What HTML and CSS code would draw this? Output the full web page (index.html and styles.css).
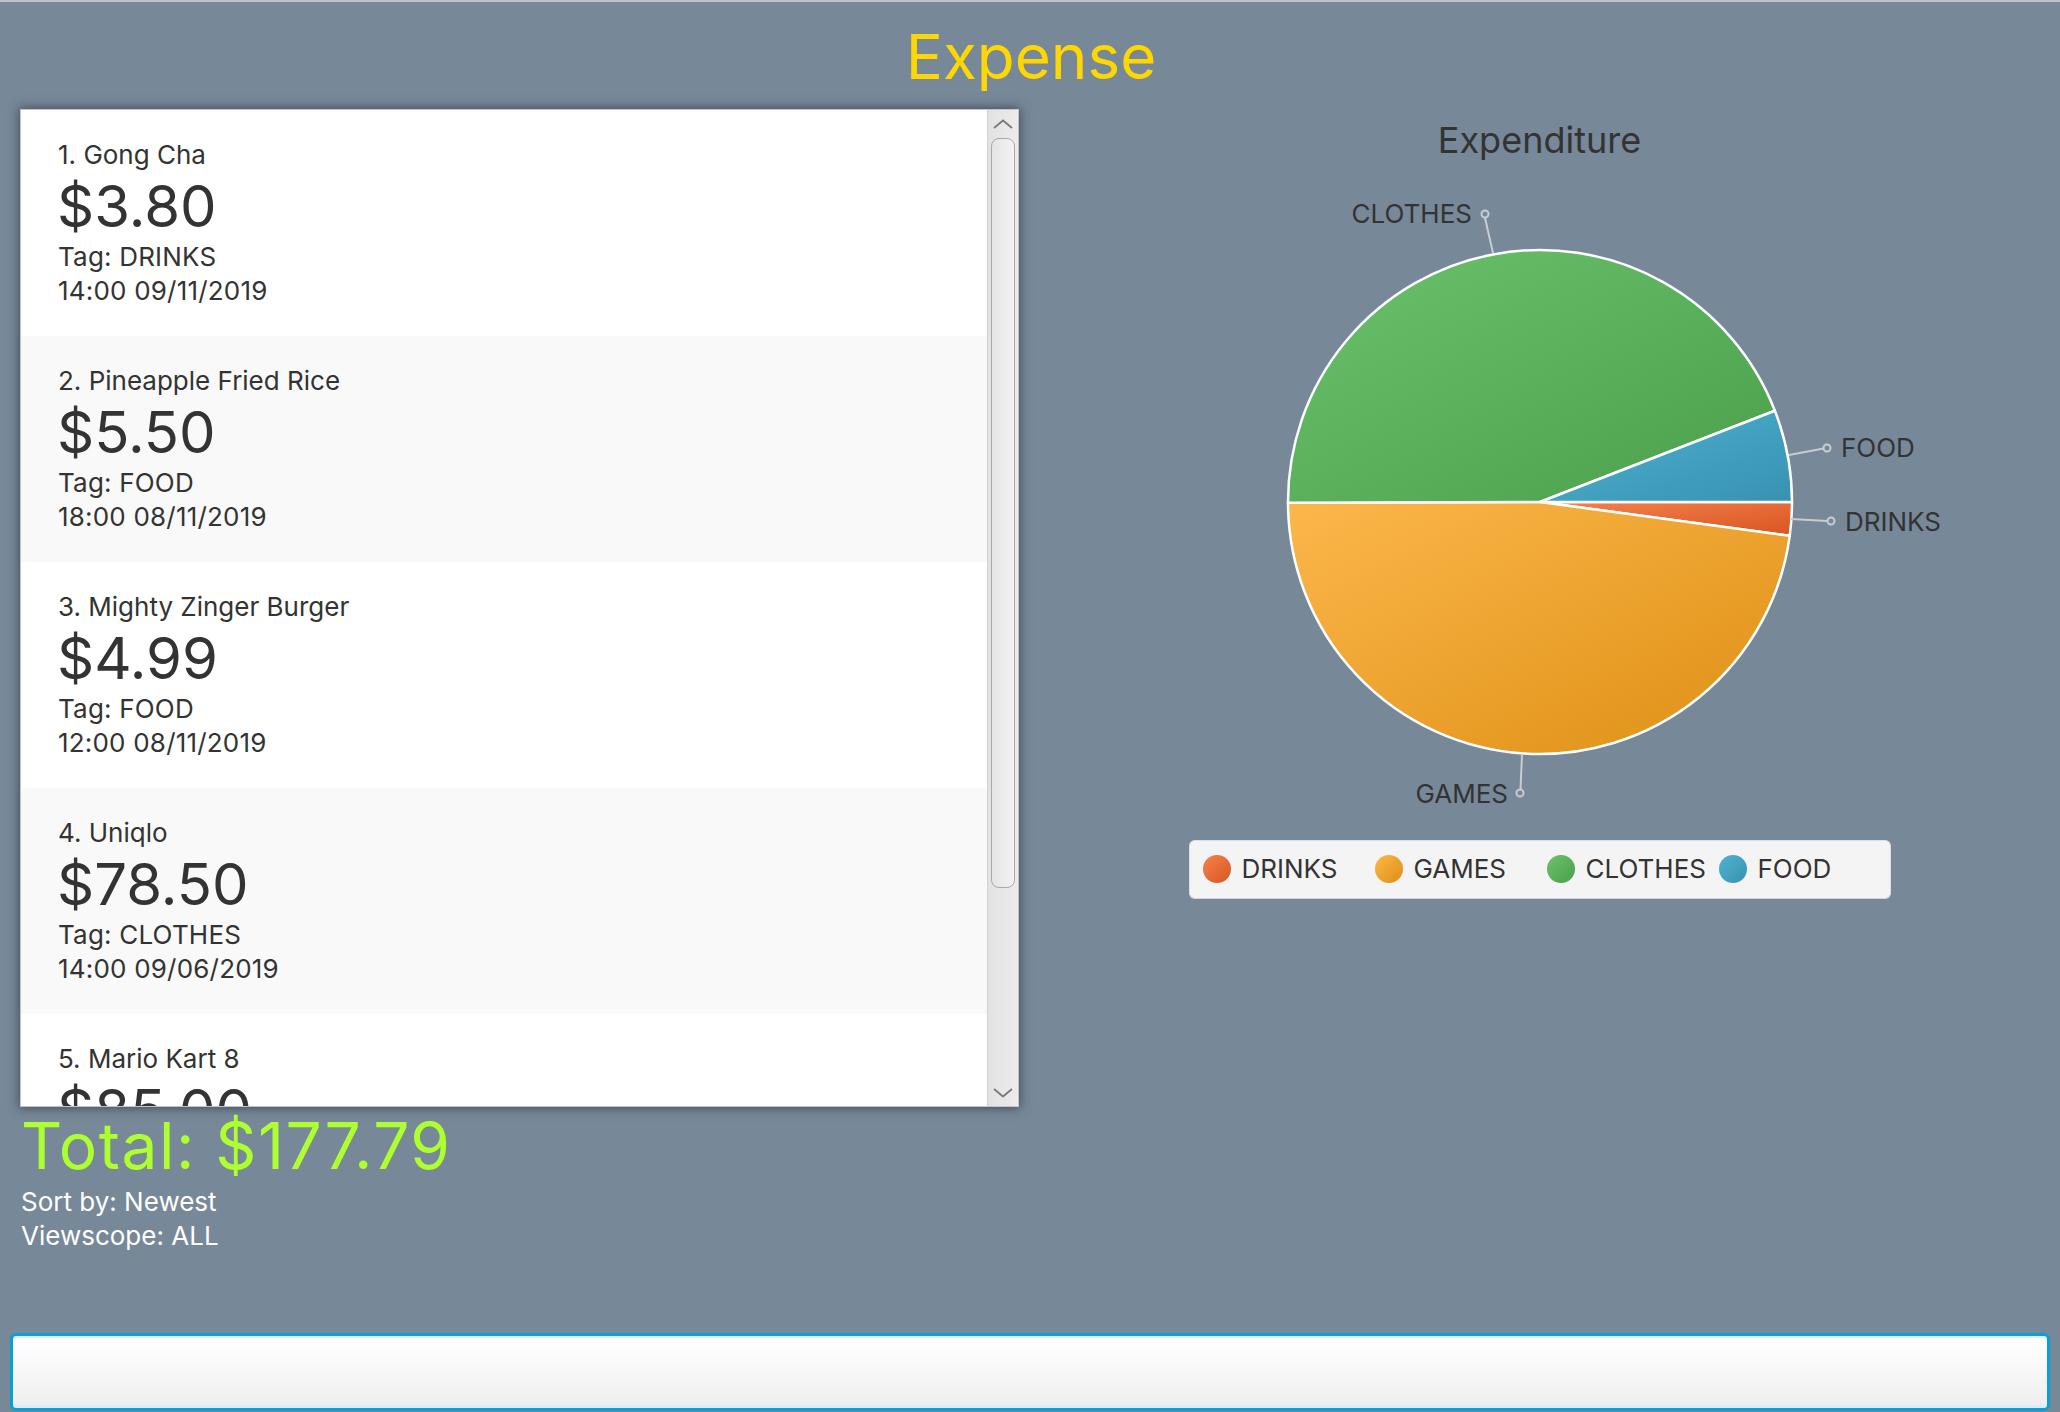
FILE: index.html
```html
<!DOCTYPE html>
<html lang="en">
<head>
<meta charset="utf-8">
<title>Expense</title>
<link rel="stylesheet" href="styles.css">
</head>
<body>
<div class="app">
  <header class="app-title">Expense</header>
  <main class="main">
    <section class="left">
      <div class="list-panel">
        <div class="list">
          <div class="card">
            <div class="card-name">1. Gong Cha</div>
            <div class="card-price">$3.80</div>
            <div class="card-line">Tag: DRINKS</div>
            <div class="card-line">14:00 09/11/2019</div>
          </div>
          <div class="card card-alt">
            <div class="card-name">2. Pineapple Fried Rice</div>
            <div class="card-price">$5.50</div>
            <div class="card-line">Tag: FOOD</div>
            <div class="card-line">18:00 08/11/2019</div>
          </div>
          <div class="card">
            <div class="card-name">3. Mighty Zinger Burger</div>
            <div class="card-price">$4.99</div>
            <div class="card-line">Tag: FOOD</div>
            <div class="card-line">12:00 08/11/2019</div>
          </div>
          <div class="card card-alt">
            <div class="card-name">4. Uniqlo</div>
            <div class="card-price">$78.50</div>
            <div class="card-line">Tag: CLOTHES</div>
            <div class="card-line">14:00 09/06/2019</div>
          </div>
          <div class="card card-last">
            <div class="card-name">5. Mario Kart 8</div>
            <div class="card-price">$85.00</div>
          </div>
        </div>
        <div class="scrollbar">
          <div class="arrow arrow-up">
            <svg width="20" height="10" viewBox="0 0 20 10"><path d="M1 9 L10 1.5 L19 9" fill="none" stroke="#7a7a7a" stroke-width="1.8"/></svg>
          </div>
          <div class="thumb"></div>
          <div class="track-fill"></div>
          <div class="arrow arrow-down">
            <svg width="20" height="10" viewBox="0 0 20 10"><path d="M1 1 L10 8.5 L19 1" fill="none" stroke="#7a7a7a" stroke-width="1.8"/></svg>
          </div>
        </div>
      </div>
      <div class="total">Total: $177.79</div>
      <div class="meta">Sort by: Newest</div>
      <div class="meta">Viewscope: ALL</div>
    </section>
    <section class="chart">
      <div class="chart-title">Expenditure</div>
      <svg class="pie" width="1041" height="678" viewBox="0 0 1041 678">
        <defs>
          <linearGradient id="gDrinks" x1="0" y1="0" x2="1" y2="1"><stop offset="0" stop-color="#f5834f"/><stop offset="1" stop-color="#d9551f"/></linearGradient>
          <linearGradient id="gGames" x1="0" y1="0" x2="1" y2="1"><stop offset="0" stop-color="#fcb74b"/><stop offset="1" stop-color="#de8f14"/></linearGradient>
          <linearGradient id="gClothes" x1="0" y1="0" x2="1" y2="1"><stop offset="0" stop-color="#6cc26c"/><stop offset="1" stop-color="#4b9f4b"/></linearGradient>
          <linearGradient id="gFood" x1="0" y1="0" x2="1" y2="1"><stop offset="0" stop-color="#4fb3d2"/><stop offset="1" stop-color="#3792b0"/></linearGradient>
        </defs>
        <g stroke="#ffffff" stroke-width="2.5" stroke-linejoin="round">
          <path d="M521,340 L773,340 A252,252 0 0 1 770.73,373.74 Z" fill="url(#gDrinks)"/>
          <path d="M521,340 L770.73,373.74 A252,252 0 0 1 269,340.84 Z" fill="url(#gGames)"/>
          <path d="M521,340 L269,340.84 A252,252 0 0 1 755.88,248.71 Z" fill="url(#gClothes)"/>
          <path d="M521,340 L755.88,248.71 A252,252 0 0 1 773,340 Z" fill="url(#gFood)"/>
        </g>
        <g stroke="#c9ccd0" stroke-width="2" fill="none">
          <path d="M474,91 L466,56"/>
          <circle cx="466" cy="52" r="3.5"/>
          <path d="M770,293 L804.5,286.5"/>
          <circle cx="808" cy="286" r="3.5"/>
          <path d="M772,357 L808.5,359"/>
          <circle cx="812" cy="359" r="3.5"/>
          <path d="M503,592 L501.5,627.5"/>
          <circle cx="501" cy="631" r="3.5"/>
        </g>
        <g class="pie-label">
          <text x="453" y="61" text-anchor="end">CLOTHES</text>
          <text x="822" y="295">FOOD</text>
          <text x="826" y="369">DRINKS</text>
          <text x="489" y="641" text-anchor="end">GAMES</text>
        </g>
      </svg>
      <div class="legend">
        <div class="legend-item"><span class="dot dot-drinks"></span><span class="legend-text">DRINKS</span></div>
        <div class="legend-item"><span class="dot dot-games"></span><span class="legend-text">GAMES</span></div>
        <div class="legend-item"><span class="dot dot-clothes"></span><span class="legend-text">CLOTHES</span></div>
        <div class="legend-item"><span class="dot dot-food"></span><span class="legend-text">FOOD</span></div>
      </div>
    </section>
  </main>
  <div class="command"><div class="command-inner"></div></div>
</div>
</body>
</html>
```
FILE: styles.css
```css
* { box-sizing: border-box; }
html, body {
  margin: 0;
  padding: 0;
  height: 100%;
}
body {
  background: #778899;
  font-family: Inter, "Noto Sans", "Liberation Sans", sans-serif;
  color: #333333;
  overflow: hidden;
}
.app {
  height: 1412px;
  display: flex;
  flex-direction: column;
  border-top: 2px solid #bfc4c9;
}
.app-title {
  padding-top: 15px;
  height: 95px;
  font-size: 62px;
  line-height: 80px;
  color: #ffd700;
  text-align: center;
  margin-right: -2px;
}
.main {
  flex: 1;
  display: flex;
  flex-direction: row;
  margin-top: 12px;
  min-height: 0;
}
.left {
  margin-left: 20px;
  width: 999px;
  display: flex;
  flex-direction: column;
}
.list-panel {
  height: 998px;
  display: flex;
  flex-direction: row;
  border: 1px solid #c4c4c4;
  background: #ffffff;
  box-shadow: 0 0 10px 1px rgba(20, 30, 40, 0.55);
  overflow: hidden;
}
.list {
  flex: 1;
  overflow: hidden;
}
.card {
  height: 226px;
  padding: 28px 0 28px 37px;
  background: #ffffff;
}
.card-last {
  height: 92px;
  padding-bottom: 0;
  overflow: hidden;
}
.card-alt { background: #f9f9f9; }
.card-name, .card-line {
  font-size: 26px;
  line-height: 34px;
  white-space: nowrap;
}
.card-line { letter-spacing: 0.2px; }
.card-price {
  font-size: 58px;
  line-height: 68px;
  margin-left: -1px;
}
.scrollbar {
  width: 31px;
  display: flex;
  flex-direction: column;
  border-left: 1px solid #d2d2d2;
  background: linear-gradient(to right, #e2e2e2, #ececec);
}
.arrow {
  display: flex;
  align-items: center;
  justify-content: center;
}
.arrow-up { height: 27px; }
.arrow-down { height: 24px; padding-bottom: 2px; }
.thumb {
  margin: 1px 3px 0 3px;
  height: 750px;
  border: 1.5px solid #a9a9a9;
  border-radius: 8px;
  background: linear-gradient(to right, #e4e4e4, #f3f3f3);
}
.track-fill { flex: 1; }
.total {
  font-size: 64px;
  line-height: 78px;
  color: #adff2f;
  margin-left: 1px;
  letter-spacing: 1.5px;
  white-space: nowrap;
}
.meta {
  font-size: 26px;
  line-height: 34px;
  color: #ffffff;
  margin-left: 1px;
}
.chart {
  width: 1041px;
  display: flex;
  flex-direction: column;
  align-items: center;
  padding-top: 9px;
}
.chart-title {
  font-size: 36px;
  line-height: 44px;
  color: #333333;
  text-align: center;
}
.pie {
  display: block;
  flex: none;
}
.pie-label text {
  font-family: Inter, "Noto Sans", "Liberation Sans", sans-serif;
  font-size: 26px;
  fill: #333333;
}
.legend {
  display: grid;
  grid-template-columns: repeat(4, 172px);
  width: 702px;
  height: 59px;
  padding: 14px 0 0 13px;
  background: #f4f4f4;
  border: 1px solid #dedfe1;
  border-bottom-color: #d2d4d7;
  border-radius: 6px;
}
.legend-item {
  display: flex;
  align-items: center;
  height: 28px;
}
.dot {
  width: 28px;
  height: 28px;
  border-radius: 50%;
  flex: none;
  margin-right: 11px;
}
.dot-drinks { background: linear-gradient(to bottom right, #f5834f, #d9551f); }
.dot-games { background: linear-gradient(to bottom right, #fcb74b, #de8f14); }
.dot-clothes { background: linear-gradient(to bottom right, #6cc26c, #4b9f4b); }
.dot-food { background: linear-gradient(to bottom right, #4fb3d2, #3792b0); }
.legend-text {
  font-size: 26px;
  line-height: 28px;
  color: #333333;
  white-space: nowrap;
}
.command {
  height: 78px;
  margin: 0 10px 1px 10px;
  border: 3px solid #0a9fd6;
  border-radius: 6px;
  background: #d9eef7;
  padding: 2px 0 3px 0;
  flex: none;
}
.command-inner {
  height: 100%;
  background: linear-gradient(to bottom, #ffffff, #efefef);
  border-radius: 3px;
}
```
